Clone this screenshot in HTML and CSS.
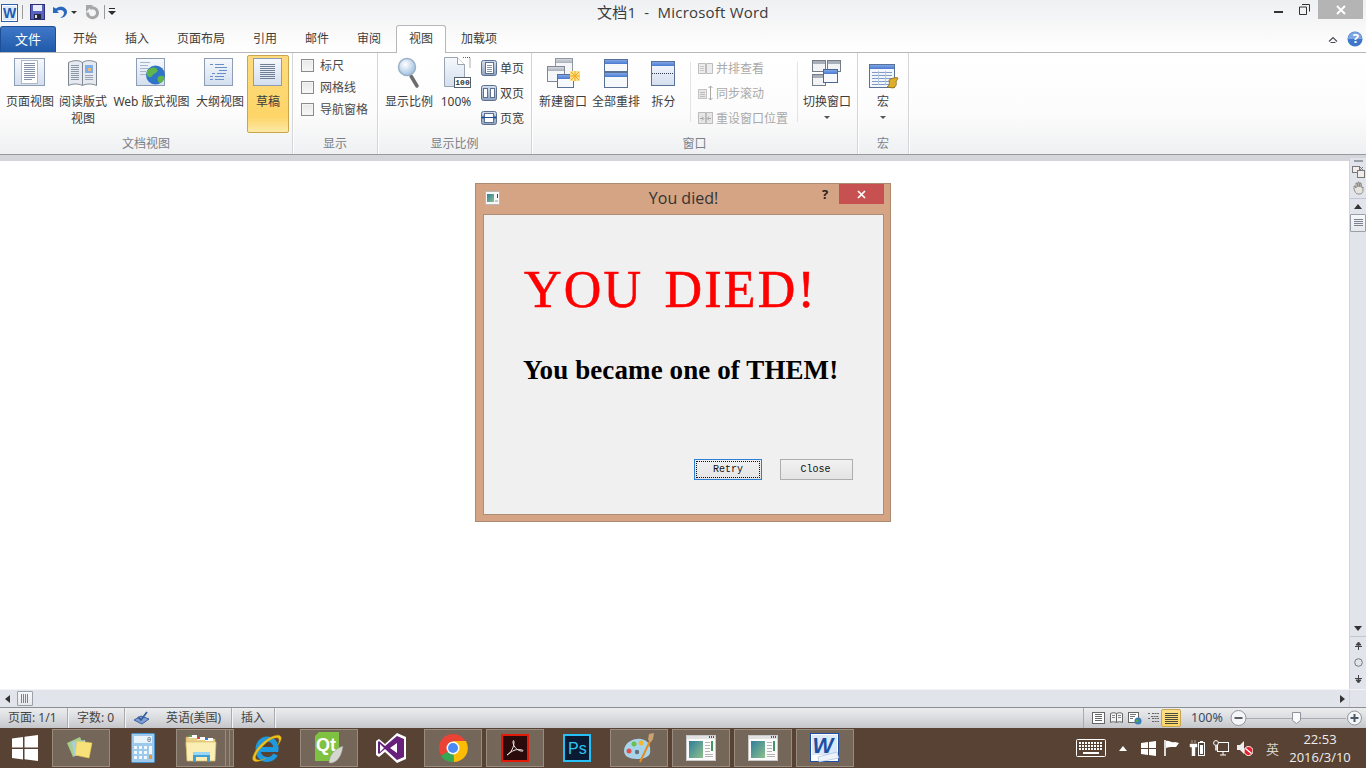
FILE: index.html
```html
<!DOCTYPE html>
<html lang="zh-CN">
<head>
<meta charset="utf-8">
<title>文档1 - Microsoft Word</title>
<link rel="stylesheet" href="styles.css">
</head>
<body>
<svg class="defs" width="0" height="0" aria-hidden="true">
  <defs>
    <linearGradient id="gBox" x1="0" y1="0" x2="0" y2="1"><stop offset="0" stop-color="#f7f9fd"/><stop offset="1" stop-color="#d3deee"/></linearGradient>
    <linearGradient id="gBar" x1="0" y1="0" x2="0" y2="1"><stop offset="0" stop-color="#7fa6e8"/><stop offset="1" stop-color="#4a79d0"/></linearGradient>
    <linearGradient id="gGrey" x1="0" y1="0" x2="0" y2="1"><stop offset="0" stop-color="#d4d8de"/><stop offset="1" stop-color="#a9afb8"/></linearGradient>
    <radialGradient id="gLens" cx=".4" cy=".35" r=".7"><stop offset="0" stop-color="#ffffff"/><stop offset="1" stop-color="#9dbde0"/></radialGradient>
    <linearGradient id="gSlate" x1="0" y1="0" x2="0" y2="1"><stop offset="0" stop-color="#d5e0ef"/><stop offset="1" stop-color="#8ea3c0"/></linearGradient>
    <linearGradient id="gMini" x1="0" y1="0" x2="1" y2="1"><stop offset="0" stop-color="#2f7f9c"/><stop offset="1" stop-color="#8fbf8a"/></linearGradient>
    <symbol id="miniwin" viewBox="0 0 30 26">
      <rect x=".5" y=".5" width="29" height="25" fill="#fbfbfb" stroke="#c9c9c9"/>
      <rect x="1" y="1" width="28" height="3" fill="#e2e2e2"/>
      <path d="M23 2h1M25 2h1M27 2h1" stroke="#555" stroke-width="2"/>
      <rect x="3" y="6" width="14" height="17" fill="url(#gMini)"/>
      <path d="M19 7.500h5M19 10.500h5M19 13.500h5M19 16.500h5M19 19.500h8M19 21.500h8" stroke="#b5b5b5"/>
      <rect x="25" y="6" width="2" height="10" fill="#3f9a62"/>
    </symbol>
  </defs>
</svg>

<div class="app">
  <header class="titlebar">
    <div class="qat">
      <svg class="qat-word" width="17" height="18" viewBox="0 0 17 18"><rect x=".5" y=".5" width="16" height="17" fill="#fff" stroke="#2a62b0"/><rect x="2" y="2" width="13" height="14" fill="#dbe8f8"/><text x="8.500" y="14" text-anchor="middle" class="svg-w">W</text></svg>
      <span class="qat-sep"></span>
      <svg width="15" height="16" viewBox="0 0 15 16"><rect x=".5" y=".5" width="14" height="15" fill="#5a62c0" stroke="#2c2f78"/><rect x="3" y="1" width="9" height="6" fill="#e9edf7"/><rect x="4" y="10" width="7" height="5" fill="#22263a"/><rect x="5" y="11" width="2" height="3" fill="#dfe3f2"/></svg>
      <svg class="qat-undo" width="16" height="15" viewBox="0 0 16 15"><path d="M1 2v6h6L5 6c3-2 7-1 7 2 0 2-2 4-4 5 4 0 7-3 7-6C15 2 8 0 4 3.500z" fill="#2a68bf"/></svg>
      <span class="drop"></span>
      <svg class="qat-redo" width="14" height="15" viewBox="0 0 14 15"><path d="M5 3.500a5 5 0 1 1-2.500 4" fill="none" stroke="#a6a6a6" stroke-width="3"/><path d="M1 0h7L1 7z" fill="#a6a6a6"/></svg>
      <span class="qat-sep qat-sep2"></span>
      <svg width="8" height="8" viewBox="0 0 8 8"><path d="M1 0h6v1H1zM0 3h8L4 7z" fill="#2b2b2b"/></svg>
    </div>
    <div class="doc-title">文档1 &nbsp;-&nbsp; Microsoft Word</div>
    <div class="winctl">
      <svg width="9" height="4" viewBox="0 0 9 4" class="wc-min"><rect y="1" width="9" height="2" fill="#333"/></svg>
      <svg width="11" height="11" viewBox="0 0 11 11" class="wc-max"><path d="M3 .5h7.500v7M.5 3h7v7.500h-7z" fill="none" stroke="#333"/></svg>
      <div class="wc-close"><svg width="10" height="10" viewBox="0 0 10 10"><path d="M1 1l8 8M9 1l-8 8" stroke="#fff" stroke-width="2"/></svg></div>
    </div>
  </header>

  <nav class="tabs">
    <div class="tab tab-file">文件</div>
    <div class="tab">开始</div>
    <div class="tab">插入</div>
    <div class="tab">页面布局</div>
    <div class="tab">引用</div>
    <div class="tab">邮件</div>
    <div class="tab">审阅</div>
    <div class="tab tab-active">视图</div>
    <div class="tab tab-last">加载项</div>
    <div class="tabs-right">
      <svg width="10" height="7" viewBox="0 0 10 7"><path d="M1 5.500L5 1.500l4 4M2.500 6.500h5" fill="none" stroke="#4a4f57" stroke-width="1.200"/></svg>
      <svg width="16" height="16" viewBox="0 0 16 16"><circle cx="8" cy="8" r="7.500" fill="#3f77c9"/><path d="M1 8a7 7 0 0 1 14 0z" fill="#7ea6e2"/></svg>
      <span class="help-q">?</span>
    </div>
  </nav>

  <section class="ribbon">
    <div class="group g1">
      <div class="gbody gap5">
        <div class="btn w48">
          <div class="ico"><svg width="32" height="32" viewBox="0 0 32 32"><rect x=".5" y=".5" width="30" height="27" fill="url(#gBox)" stroke="#8d9db3"/><rect x="7.500" y="2.500" width="16" height="23" fill="#fff" stroke="#aeb8c6"/><path d="M10 5.500h11M10 7.500h11M10 9.500h11M10 11.500h11M10 13.500h11M10 15.500h11M10 17.500h11M10 19.500h11M10 21.500h8" stroke="#8291a6"/></svg></div>
          <div class="lbl">页面视图</div>
        </div>
        <div class="btn w48">
          <div class="ico"><svg width="32" height="32" viewBox="0 0 32 32"><path d="M1.500 4.500c4-2 10-3 14 0 4-3 10-2 14 0v23c-4-2-10-2-14 0-4-2-10-2-14 0z" fill="#e6eaf0" stroke="#7d8794"/><path d="M15.500 4v23" stroke="#7d8794"/><path d="M4 7.500h8M4 9.500h8M4 11.500h8M4 13.500h8M4 15.500h8M4 17.500h8M4 19.500h8M4 21.500h8" stroke="#8e99a8"/><rect x="18" y="7" width="8" height="8" fill="#7db0e4"/><rect x="21" y="10" width="3" height="3" fill="#f2b47a"/><path d="M18 17.500h8M18 19.500h8M18 21.500h8" stroke="#9aa5b4"/></svg></div>
          <div class="lbl">阅读版式<br>视图</div>
        </div>
        <div class="btn w79">
          <div class="ico"><svg width="32" height="32" viewBox="0 0 32 32"><rect x=".5" y=".5" width="28" height="27" fill="url(#gBox)" stroke="#8d9db3"/><path d="M4 4.500h10M4 7.500h8M4 10.500h8M4 13.500h6M4 16.500h6" stroke="#a5b5cc"/><circle cx="19.500" cy="17" r="9.500" fill="#2f74c8"/><path d="M12 12c3-3 7-3 9-1s-1 4-3 5-2 4-5 3-3-5-1-7zM22 19c2-1 5-2 6 0s-2 6-4 6-3-4-2-6z" fill="#5fb54b"/></svg></div>
          <div class="lbl">Web 版式视图</div>
        </div>
        <div class="btn w48">
          <div class="ico"><svg width="32" height="32" viewBox="0 0 32 32"><rect x=".5" y=".5" width="28" height="27" fill="url(#gBox)" stroke="#8d9db3"/><path d="M6 6.500h3M11 6.500h9M11 9.500h12M15 12.500h8M8 15.500h3M13 15.500h9M6 18.500h3M11 18.500h9M6 21.500h3M11 21.500h9" stroke="#6a8fc8"/></svg></div>
          <div class="lbl">大纲视图</div>
        </div>
        <div class="btn btn-on">
          <div class="ico"><svg width="30" height="30" viewBox="0 0 30 30"><rect x=".5" y=".5" width="28" height="27" fill="url(#gBox)" stroke="#8d9db3"/><path d="M7 6.500h15M7 8.500h15M7 10.500h15M7 12.500h15M7 14.500h15M7 16.500h15M7 18.500h15M7 20.500h15" stroke="#6f7f95"/></svg></div>
          <div class="lbl">草稿</div>
        </div>
      </div>
      <div class="gname">文档视图</div>
    </div>

    <div class="group g2">
      <div class="gbody col-checks">
        <label class="chk"><span class="box"></span>标尺</label>
        <label class="chk"><span class="box"></span>网格线</label>
        <label class="chk"><span class="box"></span>导航窗格</label>
      </div>
      <div class="gname">显示</div>
    </div>

    <div class="group g3">
      <div class="gbody">
        <div class="btn w48">
          <div class="ico ico-low"><svg width="24" height="32" viewBox="0 0 24 32"><path d="M14 19l6 10" stroke="#6c6c6c" stroke-width="3.500" stroke-linecap="round"/><circle cx="10" cy="10" r="8.500" fill="url(#gLens)" stroke="#9ab0c8" stroke-width="1.500"/></svg></div>
          <div class="lbl">显示比例</div>
        </div>
        <div class="btn w32">
          <div class="ico ico-low ico-zoom"><svg width="27" height="32" viewBox="0 0 27 32"><path d="M.5 .5h13l7 7v22H.5z" fill="url(#gBox)" stroke="#9aa4b2"/><path d="M13.500 .5v7h7" fill="#fff" stroke="#9aa4b2"/><path d="M19 .5h7v10" fill="none" stroke="#55606e" stroke-dasharray="1 1"/><rect x="10.500" y="20.500" width="16" height="10" fill="#fff" stroke="#55606e"/><text x="18.500" y="28" text-anchor="middle" class="svg-100">100</text></svg></div>
          <div class="lbl">100%</div>
        </div>
        <div class="list">
          <div class="li"><svg width="16" height="16" viewBox="0 0 16 16"><rect x=".5" y=".5" width="15" height="15" rx="2" fill="url(#gSlate)" stroke="#5d7090"/><rect x="4.500" y="2.500" width="8" height="11" fill="#fff" stroke="#5d7090"/><path d="M6 5.500h5M6 7.500h5M6 9.500h5M6 11.500h5" stroke="#8795aa"/></svg>单页</div>
          <div class="li"><svg width="16" height="16" viewBox="0 0 16 16"><rect x=".5" y=".5" width="15" height="15" rx="2" fill="url(#gSlate)" stroke="#5d7090"/><rect x="2.500" y="3.500" width="4" height="9" fill="#fff" stroke="#5d7090"/><rect x="9.500" y="3.500" width="4" height="9" fill="#fff" stroke="#5d7090"/></svg>双页</div>
          <div class="li"><svg width="16" height="16" viewBox="0 0 16 16"><rect x=".5" y="1.500" width="15" height="13" rx="2" fill="url(#gSlate)" stroke="#5d7090"/><rect x="3.500" y="3.500" width="9" height="9" fill="#fff" stroke="#5d7090"/><path d="M1 7.500h14M1 7.500l2-2M1 7.500l2 2M15 7.500l-2-2M15 7.500l-2 2" stroke="#1c4f96" fill="none"/></svg>页宽</div>
        </div>
      </div>
      <div class="gname">显示比例</div>
    </div>

    <div class="group g4">
      <div class="gbody">
        <div class="btn w48">
          <div class="ico"><svg width="33" height="32" viewBox="0 0 33 32"><rect x="8.500" y=".5" width="17" height="17" fill="#f4f6fa" stroke="#8e97a4"/><rect x="9" y="1" width="16" height="4" fill="url(#gGrey)"/><rect x=".5" y="8.500" width="17" height="15" fill="#f4f6fa" stroke="#7e8793"/><rect x="1" y="9" width="16" height="4" fill="url(#gGrey)"/><rect x="10.500" y="16.500" width="16" height="13" fill="#f6f8fc" stroke="#5a7196"/><rect x="11" y="17" width="15" height="4" fill="url(#gBar)"/><path d="M23 13h10v10H23z" fill="#fbe28a"/><path d="M28 13v10M23 18h10M24 14l8 8M32 14l-8 8" stroke="#f3a81e"/></svg></div>
          <div class="lbl">新建窗口</div>
        </div>
        <div class="btn w48 ml5">
          <div class="ico"><svg width="24" height="32" viewBox="0 0 24 32"><rect x=".5" y="1.500" width="23" height="12" fill="#f6f8fc" stroke="#5a7196"/><rect x="1" y="2" width="22" height="4" fill="url(#gBar)"/><rect x=".5" y="14.500" width="23" height="15" fill="#f6f8fc" stroke="#5a7196"/><rect x="1" y="15" width="22" height="4" fill="url(#gBar)"/></svg></div>
          <div class="lbl">全部重排</div>
        </div>
        <div class="btn w25 ml11">
          <div class="ico"><svg width="25" height="32" viewBox="0 0 25 32"><rect x=".5" y="3.500" width="23" height="24" fill="url(#gBox)" stroke="#5a7196"/><rect x="1" y="4" width="22" height="4" fill="url(#gBar)"/><path d="M1 15.500h22" stroke="#333c4a" stroke-dasharray="1 1"/></svg></div>
          <div class="lbl">拆分</div>
        </div>
        <span class="vdiv vdiv1"></span>
        <div class="list list-off">
          <div class="li"><svg width="17" height="16" viewBox="0 0 17 16"><path d="M1.500 3.500h7v10h-7zM9.500 3.500h6v10h-6z" fill="#ececec" stroke="#bdbdbd"/><path d="M3 6.500h4M3 8.500h4M3 10.500h4" stroke="#c8c8c8"/></svg>并排查看</div>
          <div class="li"><svg width="17" height="16" viewBox="0 0 17 16"><rect x="1.500" y="4.500" width="8" height="9" fill="#e6e6e6" stroke="#c4c4c4"/><path d="M3 7.500h5M3 9.500h5M3 11.500h5" stroke="#bdbdbd"/><path d="M13.500 1v14M11.500 3l2-2 2 2M11.500 13l2 2 2-2" fill="none" stroke="#a9a9a9"/></svg>同步滚动</div>
          <div class="li"><svg width="17" height="16" viewBox="0 0 17 16"><rect x="1.500" y="2.500" width="7" height="11" fill="#e6e6e6" stroke="#bdbdbd"/><rect x="9.500" y="2.500" width="6" height="11" fill="#e6e6e6" stroke="#bdbdbd"/><path d="M3 8.500h3M5 6.500l2 2-2 2M14 8.500h-3M12 6.500l-2 2 2 2" fill="none" stroke="#a3a3a3"/></svg>重设窗口位置</div>
        </div>
        <span class="vdiv vdiv2"></span>
        <div class="btn w48 ml5">
          <div class="ico"><svg width="30" height="32" viewBox="0 0 30 32"><rect x=".5" y="2.500" width="13" height="11" fill="#f2f3f5" stroke="#767c85"/><rect x="1" y="3" width="12" height="3" fill="#a9afb8"/><rect x="15.500" y="2.500" width="13" height="11" fill="#f2f3f5" stroke="#767c85"/><rect x="16" y="3" width="12" height="3" fill="#a9afb8"/><rect x=".5" y="16.500" width="13" height="11" fill="#f2f3f5" stroke="#767c85"/><rect x="1" y="17" width="12" height="3" fill="#a9afb8"/><rect x="11.500" y="11.500" width="14" height="13" fill="#f6f8fc" stroke="#4d6790"/><rect x="12" y="12" width="13" height="4" fill="url(#gBar)"/></svg></div>
          <div class="lbl">切换窗口</div>
          <span class="drop drop-btn"></span>
        </div>
      </div>
      <div class="gname">窗口</div>
    </div>

    <div class="group g5">
      <div class="gbody">
        <div class="btn w50">
          <div class="ico ico-macro"><svg width="30" height="28" viewBox="0 0 30 28"><rect x=".5" y=".5" width="25" height="23" fill="#f3f6fb" stroke="#5a7196"/><rect x="1" y="1" width="24" height="4" fill="url(#gBar)"/><path d="M3 8.500h20M3 11.500h20M3 14.500h20M3 17.500h20M3 20.500h20" stroke="#7f9cc7"/><path d="M9.500 7v14M16.500 7v14" stroke="#b5c6de"/><path d="M20 16c3-2 7-3 9-2l-2 4c1 2 0 5-3 6l-6-1c2-1 3-3 2-7z" fill="#dcae2c" stroke="#8a6a12" stroke-width=".8"/></svg></div>
          <div class="lbl">宏</div>
          <span class="drop drop-btn"></span>
        </div>
      </div>
      <div class="gname">宏</div>
    </div>
  </section>

  <div class="strip"></div>

  <div class="docrow">
    <main class="doc"></main>
    <aside class="vscroll">
      <div class="vs-top">
        <span class="vs-dash"></span>
        <svg width="13" height="13" viewBox="0 0 13 13"><rect x=".5" y="1.500" width="7" height="6" fill="#f2ecec" stroke="#777"/><rect x="5.500" y="5.500" width="7" height="7" fill="#f2ecec" stroke="#777"/><path d="M8 2l3 3M11 2L8 5" stroke="#777"/></svg>
        <svg width="13" height="14" viewBox="0 0 13 14"><path d="M2 8V5l1 0 1 2V2l1 0 1 4V1h1l1 5V2h1l1 5 1-1v3c0 2-1 4-3 4H6C4 13 3 11 2 8z" fill="#e6e4dc" stroke="#777" stroke-width=".8"/></svg>
        <span class="vs-line"></span>
        <span class="arrow-up"></span>
        <span class="vs-thumb"><svg width="9" height="8" viewBox="0 0 9 8"><path d="M0 .5h9M0 2.500h9M0 4.500h9M0 6.500h9" stroke="#7c828c"/></svg></span>
      </div>
      <div class="vs-bot">
        <span class="arrow-down"></span>
        <span class="vs-line"></span>
        <svg width="7" height="8" viewBox="0 0 7 8"><path d="M3.500 0L6 3H1zM0 4.500h7M3.500 3v5" stroke="#444" fill="#444"/></svg>
        <svg class="vs-circle" width="9" height="9" viewBox="0 0 9 9"><circle cx="4.500" cy="4.500" r="3.800" fill="none" stroke="#777"/></svg>
        <svg width="7" height="8" viewBox="0 0 7 8"><path d="M3.500 8L6 5H1zM0 3.500h7M3.500 0v5" stroke="#444" fill="#444"/></svg>
      </div>
    </aside>
  </div>

  <div class="hscroll">
    <span class="arrow-left"></span>
    <span class="hs-thumb"><svg width="8" height="9" viewBox="0 0 8 9"><path d="M.5 0v9M2.500 0v9M4.500 0v9M6.500 0v9" stroke="#7c828c"/></svg></span>
    <span class="arrow-right"></span>
    <span class="hs-corner"></span>
  </div>

  <footer class="status">
    <span class="st st-page">页面: 1/1</span>
    <span class="st st-words">字数: 0</span>
    <span class="st st-lang"><svg width="17" height="15" viewBox="0 0 17 15"><path d="M1 9l7-4 8 3-7 5z" fill="#7ea0d6" stroke="#3b5f9c"/><path d="M5 6l3 3 6-8" fill="none" stroke="#3b5f9c" stroke-width="1.800"/></svg>英语(美国)</span>
    <span class="st st-ins">插入</span>
    <div class="st-right">
      <svg class="vw" width="13" height="12" viewBox="0 0 13 12"><rect x=".5" y=".5" width="12" height="11" fill="#fff" stroke="#666"/><path d="M3 2.500h7M3 4.500h7M3 6.500h7M3 8.500h7" stroke="#666"/></svg>
      <svg class="vw" width="13" height="12" viewBox="0 0 13 12"><path d="M.5 1.500c2-1 4-1 6 0 2-1 4-1 6 0v9c-2-1-4-1-6 0-2-1-4-1-6 0zM6.500 1.500v9" fill="#f3f3f3" stroke="#666"/><path d="M2 3.500h3M2 5.500h3M8 3.500h3M8 5.500h3" stroke="#888"/></svg>
      <svg class="vw" width="14" height="13" viewBox="0 0 14 13"><rect x=".5" y=".5" width="10" height="10" fill="#fff" stroke="#666"/><path d="M2 2.500h6M2 4.500h5M2 6.500h3" stroke="#777"/><circle cx="10" cy="9" r="3.500" fill="#3a80b8"/><path d="M8 8c2-1 3 0 2 2l-2 0z" fill="#55aa44"/></svg>
      <svg class="vw" width="13" height="12" viewBox="0 0 13 12"><path d="M1 1.500h2M5 1.500h7M4 4.500h8M1 6.500h2M5 6.500h7M5 9.500h7" stroke="#666" stroke-dasharray="2 .6"/></svg>
      <span class="vw-on"><svg width="13" height="11" viewBox="0 0 13 11"><path d="M0 .5h13M0 2.500h13M0 4.500h13M0 6.500h13M0 8.500h13M0 10.500h13" stroke="#4b4b3c"/></svg></span>
      <span class="zoomtext">100%</span>
      <svg class="zoomer" width="132" height="18" viewBox="0 0 132 18"><path d="M16 9.500h100" stroke="#a9adb3"/><circle cx="8.500" cy="9" r="7.500" fill="#f4f5f7" stroke="#8f949c"/><rect x="4.500" y="8" width="8" height="2" fill="#5a5f67"/><circle cx="124.500" cy="9" r="7" fill="#f4f5f7" stroke="#8f949c"/><path d="M120.500 9h8M124.500 5v8" stroke="#4a5968" stroke-width="2"/><path d="M62.500 3.500h8v8l-4 3-4-3z" fill="#fafafa" stroke="#8f949c"/></svg>
    </div>
  </footer>

  <div class="taskbar">
    <div class="tb-start"><svg width="26" height="26" viewBox="0 0 26 26"><path d="M0 3.500l11-1.500v10.500H0zM12.500 1.800L26 0v12.500H12.500zM0 14h11v10.500L0 23zM12.500 14H26v12l-13.500-1.800z" fill="#fff"/></svg></div>

    <div class="tb hl"><svg width="32" height="28" viewBox="0 0 32 28"><path d="M2 9l13-6 6 14-13 6z" fill="#a6d08a"/><path d="M7 8l13-2 2 14-13 2z" fill="#a8cdea"/><path d="M12 7l15 2-3 15-14-3z" fill="#f7e27a" stroke="#e8c94c" stroke-width=".6"/></svg></div>

    <div class="tb"><svg width="24" height="30" viewBox="0 0 24 30"><rect x=".5" y=".5" width="23" height="29" rx="1" fill="#9cc9ec" stroke="#4c93cc"/><rect x="3" y="3" width="18" height="7" fill="#e9f3fb"/><text x="16" y="9" class="svg-calc">0</text><path d="M3 13h3v3H3zM8 13h3v3H8zM13 13h3v3h-3zM3 18h3v3H3zM8 18h3v3H8zM13 18h3v3h-3zM3 23h3v3H3zM8 23h3v3H8zM13 23h3v3h-3z" fill="#f4f8fc"/><rect x="18" y="13" width="3" height="8" fill="#f4f8fc"/><rect x="18" y="22" width="3" height="4" fill="#e8943a"/></svg></div>

    <div class="tb-stack">
      <div class="tb hl tb-exp"><svg width="32" height="30" viewBox="0 0 32 30"><path d="M1 4h11l2 2h16v8H1z" fill="#e9cf85" stroke="#c9a95a" stroke-width=".6"/><rect x="4" y="2" width="8" height="3" fill="#fff"/><rect x="4" y="2" width="3" height="2" fill="#4aa84a"/><rect x="12" y="4" width="8" height="3" fill="#fff"/><rect x="12" y="4" width="3" height="2" fill="#d04a3a"/><rect x="20" y="5" width="8" height="3" fill="#fff"/><rect x="20" y="5" width="3" height="2" fill="#3a80d0"/><path d="M1 9h30l-1 19H2z" fill="#fbeeb4" stroke="#d9bd6e" stroke-width=".7"/><path d="M8 21h17v8h-3v-5H11v5H8z" fill="#3fa0d8"/><path d="M8 19h17v3H8z" fill="#9bd6f2"/></svg></div>
      <span class="tb-edge"></span><span class="tb-edge"></span>
    </div>

    <div class="tb"><svg width="31" height="32" viewBox="0 0 31 32"><path d="M6.500 17.500H24c.5-6-3.500-10.500-9-10.500-5 0-9 4.500-9 10.500S10 27.500 15 27.500c4 0 7-2 8.500-5" fill="none" stroke="#1e9be0" stroke-width="5"/><path d="M1 28C-1 24 7 12 17 6c6-3 11-4 12-1 1 2-1 5-3 8 1-3 2-6 0-7-3-1-8 1-13 6C7 17 2 24 4 27c2 2 6 1 10-1-5 3-11 5-13 2z" fill="#f1c21b" stroke="#c99a12" stroke-width=".5"/></svg></div>

    <div class="tb hl"><svg width="30" height="34" viewBox="0 0 30 34"><path d="M5 1h20v20l-7 9H1V5z" fill="#7fc241"/><text x="2" y="20" class="svg-qt">Qt</text><path d="M15 32c0-7 5-14 14-17-1 8-4 15-11 17z" fill="#d6d6d0" stroke="#8e8e88" stroke-width=".5"/></svg></div>

    <div class="tb"><svg width="32" height="32" viewBox="0 0 32 32"><path d="M22 1l9 4v22l-9 4-12-11-6 5-3-2V9l3-2 6 5z" fill="#fff"/><path d="M22 4l7 3v18l-7 3-12-11-6 5-1-1V10l1-1 6 5zM22 11l-7 5 7 5zM5 12v8l4-4z" fill="#68217a" fill-rule="evenodd"/></svg></div>

    <div class="tb hl"><svg width="30" height="30" viewBox="0 0 30 30"><circle cx="15" cy="15" r="14" fill="#ea4335"/><path d="M15 15L3 23a14 14 0 0 0 13 6z" fill="#34a853"/><path d="M15 8h13a14 14 0 0 1-12 21z" fill="#fbbc05"/><circle cx="15" cy="15" r="6.500" fill="#fff"/><circle cx="15" cy="15" r="5" fill="#4a8af4"/></svg></div>

    <div class="tb hl"><svg width="28" height="28" viewBox="0 0 28 28"><rect x="1" y="1" width="26" height="26" fill="#2a0a0a" stroke="#e21a0a" stroke-width="2"/><path d="M6 21c4-2 7-8 7-13 0-2-1-2-1 0 0 5 6 10 10 9 1-1-4-2-8-1-3 1-7 4-8 5z" fill="none" stroke="#f0e6e6" stroke-width="1"/></svg></div>

    <div class="tb"><svg width="28" height="28" viewBox="0 0 28 28"><rect x="1" y="1" width="26" height="26" fill="#0a1a33" stroke="#25c0f5" stroke-width="2"/><text x="5" y="20" class="svg-ps">Ps</text></svg></div>

    <div class="tb hl"><svg width="32" height="32" viewBox="0 0 32 32"><path d="M1 19C1 11 10 6 18 7c8 1 10 8 9 14-1 5-9 6-13 6-8 0-13-3-13-8z" fill="#a7d4ea"/><circle cx="6" cy="19" r="2.500" fill="#e0504a"/><circle cx="11" cy="12" r="2.500" fill="#6cc04a"/><circle cx="18" cy="11" r="2.500" fill="#f2b632"/><circle cx="14" cy="20" r="2.200" fill="#64707c"/><path d="M17 30L28 7" stroke="#e88a1c" stroke-width="2"/><path d="M25 8l1-6 5-1-1 6-2 3z" fill="#c9a470"/></svg></div>

    <div class="tb hl"><svg width="30" height="26"><use href="#miniwin"/></svg></div>
    <div class="tb hl"><svg width="30" height="26"><use href="#miniwin"/></svg></div>

    <div class="tb hl"><svg width="30" height="30" viewBox="0 0 30 30"><rect x=".5" y=".5" width="28" height="28" fill="#fff" stroke="#1d4fa2"/><rect x="2" y="2" width="25" height="20" fill="#dbe8f8"/><text x="13" y="20" text-anchor="middle" class="svg-word">W</text><path d="M8 24l19-5 2 6-20 4z" fill="#eef3fa" stroke="#8aa6d0" stroke-width=".5"/></svg></div>

    <div class="tray">
      <svg class="t-kb" width="30" height="18" viewBox="0 0 30 18"><rect x=".5" y=".5" width="29" height="17" rx="1" fill="none" stroke="#fff"/><path d="M3 4h24M3 7h24M3 10h24" stroke="#fff" stroke-width="2" stroke-dasharray="2 1"/><path d="M7 14h16" stroke="#fff" stroke-width="2"/></svg>
      <svg class="t-up" width="8" height="5" viewBox="0 0 8 5"><path d="M4 0l4 5H0z" fill="#fff"/></svg>
      <svg class="t-win" width="15" height="15" viewBox="0 0 15 15"><path d="M0 2l7-1v6H0zM8 1l7-1v7H8zM0 8h7v6l-7-1zM8 8h7v7l-7-1z" fill="#fff"/></svg>
      <svg class="t-flag" width="16" height="16" viewBox="0 0 16 16"><path d="M1 0v16" stroke="#fff" stroke-width="1.600"/><path d="M2 1c3-1 5 2 9 1l4 1-3 4H8C6 7 4 7 2 8z" fill="#fff"/></svg>
      <svg class="t-bat" width="16" height="16" viewBox="0 0 16 16"><path d="M3 0v3M6 0v3M1 4h7v3H6v9H3V7H1z" fill="#fff" stroke="#fff" stroke-width=".5"/><rect x="9.500" y="2.500" width="6" height="13" fill="none" stroke="#fff"/><rect x="11" y="5" width="3" height="9" fill="#fff"/><rect x="11" y="1" width="3" height="1" fill="#fff"/></svg>
      <svg class="t-net" width="16" height="16" viewBox="0 0 16 16"><rect x="4.500" y="2.500" width="11" height="9" fill="none" stroke="#fff"/><path d="M7 15h6M10 12v3" stroke="#fff"/><circle cx="3" cy="3" r="2.400" fill="#574234" stroke="#fff"/><path d="M3 5.500v5" stroke="#fff" stroke-width="1.500"/></svg>
      <svg class="t-vol" width="16" height="16" viewBox="0 0 16 16"><path d="M0 5h3l4-4v13l-4-4H0z" fill="#eee"/><circle cx="11.500" cy="11" r="4.500" fill="#e2202a" stroke="#fff"/><path d="M8.500 8.500l6 5" stroke="#fff" stroke-width="1.500"/></svg>
      <span class="t-ime">英</span>
      <div class="clock"><div>22:53</div><div>2016/3/10</div></div>
    </div>
  </div>

  <div class="dialog">
    <div class="dlg-head">
      <svg class="dlg-ico" width="15" height="14" viewBox="0 0 15 14"><rect x=".5" y=".5" width="14" height="13" fill="#f8f8f8" stroke="#b9b9b9"/><rect x="2" y="3" width="7" height="8" fill="url(#gMini)"/><rect x="10" y="9" width="3" height="2" fill="#c9c9c9"/><rect x="12" y="3" width="1" height="4" fill="#444"/></svg>
      <span class="dlg-title">You died!</span>
      <span class="dlg-help">?</span>
      <span class="dlg-close"><svg width="9" height="9" viewBox="0 0 9 9"><path d="M1 1l7 7M8 1L1 8" stroke="#fff" stroke-width="1.700"/></svg></span>
    </div>
    <div class="dlg-body">
      <h1 class="died">YOU DIED!</h1>
      <p class="them">You became one of THEM!</p>
      <div class="dlg-btns">
        <button class="qbtn qbtn-focus"><span>Retry</span></button>
        <button class="qbtn qbtn-close"><span>Close</span></button>
      </div>
    </div>
  </div>
</div>
</body>
</html>
```

FILE: styles.css
```css
* { box-sizing: border-box; }
html, body { margin: 0; padding: 0; width: 1366px; height: 768px; overflow: hidden; }
body {
  font-family: "Noto Sans", "Noto Sans CJK SC", sans-serif;
  font-size: 12px;
  color: #3c3c3c;
  background: #fff;
}
svg { display: block; flex: none; }
.defs { position: absolute; }

.app { position: relative; width: 1366px; height: 768px; display: flex; flex-direction: column; }

/* title bar */
.titlebar {
  height: 25px; flex: none; display: flex; align-items: flex-start; position: relative;
  background: linear-gradient(#eef0f2, #f7f7f8);
}
.qat { display: flex; align-items: center; height: 24px; padding-left: 1px; }
.qat-word { margin-top: 2px; }
.qat-sep { width: 1px; height: 14px; background: #9a9a9a; margin: 0 7px 0 4px; }
.qat-sep2 { margin: 0 3px 0 5px; }
.qat-undo { margin-left: 7px; }
.qat-redo { margin-left: 8px; }
.drop { width: 0; height: 0; border-left: 3px solid transparent; border-right: 3px solid transparent; border-top: 3px solid #333; margin-left: 3px; }
.doc-title {
  position: absolute; left: 597px; top: 0; line-height: 25px;
  font-family: "Open Sans", "Noto Sans CJK SC", sans-serif; font-size: 15px; letter-spacing: .2px; color: #3b3b3b; white-space: nowrap;
}
.winctl { margin-left: auto; display: flex; align-items: flex-start; padding-right: 3px; }
.wc-min { margin: 10px 16px 0 0; }
.wc-max { margin: 4px 8px 0 0; }
.wc-close { width: 45px; height: 19px; background: #b4b4b4; display: flex; align-items: center; justify-content: center; }

/* tabs */
.tabs {
  height: 28px; flex: none; display: flex; align-items: stretch; padding-top: 1px;
  background: linear-gradient(#f7f7f8, #ffffff);
  border-bottom: 1px solid #b5b7ba;
}
.tab { padding: 0 14px; line-height: 25px; color: #3c3c3c; font-size: 12px; }
.tab-file {
  width: 56px; padding: 0; text-align: center; margin-right: 3px; color: #fff; font-size: 13px;
  background: linear-gradient(#3f78c8, #1f5aa8); border: 1px solid #1d4f97; border-bottom: 0; border-radius: 3px 3px 0 0;
}
.tab-active {
  padding: 0 12px; margin-left: 1px; margin-top: -1px; margin-bottom: -1px; line-height: 26px; background: #fff;
  border: 1px solid #b5b7ba; border-bottom: 0; border-radius: 3px 3px 0 0;
}
.tab-last { padding-left: 15px; }
.tabs-right { margin-left: auto; position: relative; display: flex; align-items: center; gap: 9px; padding-right: 3px; }
.help-q { position: absolute; right: 7px; top: 3px; font-size: 13px; line-height: 18px; font-weight: 700; color: #fff; }

/* ribbon */
.ribbon {
  height: 102px; flex: none; display: flex;
  background: linear-gradient(#ffffff, #fcfcfc 60%, #eff0f2);
  border-bottom: 1px solid #96999e;
}
.group { display: flex; flex-direction: column; border-right: 1px solid #d3d5d9; box-shadow: 1px 0 0 #fff; flex: none; }
.g1 { width: 293px; } .g2 { width: 85px; } .g3 { width: 154px; } .g4 { width: 326px; } .g5 { width: 51px; }
.gbody { flex: 1; display: flex; padding-top: 2px; }
.g1 .gbody { padding-left: 6px; }
.g3 .gbody { padding-left: 7px; gap: 7px; }
.g4 .gbody { padding-left: 7px; }
.gap5 { gap: 5px; }
.gname { height: 18px; margin-bottom: 1px; line-height: 18px; text-align: center; color: #7b7f87; }
.btn { display: flex; flex-direction: column; align-items: center; flex: none; text-align: center; }
.w25 { width: 25px; } .w32 { width: 32px; } .w48 { width: 48px; } .w50 { width: 50px; } .w79 { width: 79px; }
.ml5 { margin-left: 5px; } .ml11 { margin-left: 11px; }
.ico { height: 38px; padding-top: 3px; }
.ico-low { padding-top: 2px; }
.ico-zoom { padding-left: 3px; }
.ico-macro { padding: 9px 0 0 1px; }
.lbl { line-height: 17px; white-space: nowrap; color: #3c3c3c; }
.btn-on {
  width: 42px; height: 78px; margin-left: -2px;
  background: linear-gradient(#fddb7d, #fdd568 80%, #fde9a8); border: 1px solid #c9a64e; border-radius: 2px;
}
.btn-on .ico { height: 37px; padding-top: 2px; }
.col-checks { flex-direction: column; padding: 1px 0 0 8px; }
.chk { display: flex; align-items: center; height: 22px; gap: 6px; color: #4a4a4a; }
.box { width: 13px; height: 13px; background: linear-gradient(#e7e7e7, #f8f8f8); border: 1px solid #8b8b8b; box-shadow: inset 0 0 0 1px #f4f4f4; }
.list { display: flex; flex-direction: column; margin-left: 2px; }
.li { display: flex; align-items: center; height: 25px; gap: 3px; white-space: nowrap; }
.list-off { width: 100px; margin-left: 6px; color: #a9a9a9; }
.list-off .li { gap: 2px; }
.vdiv { width: 1px; height: 60px; margin-top: 7px; background: #e2e3e6; flex: none; }
.vdiv1 { margin-left: 14px; }
.drop-btn { border-top-color: #555; margin: 6px 0 0 0; }

.strip { height: 3px; flex: none; background: #d3d6da; }

/* document */
.docrow { height: 531px; flex: none; display: flex; }
.doc { flex: 1; background: #fff; border-top: 3px solid #d3d6da; }
.vscroll {
  width: 17px; flex: none; display: flex; flex-direction: column; justify-content: space-between; align-items: center;
  background: #e1e4ea; border-left: 1px solid #cfd3da;
}
.vs-top, .vs-bot { display: flex; flex-direction: column; align-items: center; }
.vs-dash { width: 9px; height: 2px; background: #9a9ea6; margin-top: 2px; margin-bottom: 3px; }
.vs-top svg + svg { margin-top: 3px; }
.vs-line { width: 16px; height: 1px; background: #c3c7cf; }
.vs-top .vs-line { margin-top: 3px; }
.arrow-up { width: 0; height: 0; border: 4px solid transparent; border-top: 0; border-bottom: 5px solid #333; margin-top: 5px; }
.vs-thumb {
  width: 16px; height: 18px; margin-top: 5px; display: flex; align-items: center; justify-content: center;
  background: linear-gradient(#f7f8fa, #e6e8ec); border: 1px solid #9aa0a8; border-radius: 1px;
}
.vs-bot { padding-bottom: 6px; }
.arrow-down { width: 0; height: 0; border: 4px solid transparent; border-bottom: 0; border-top: 5px solid #333; margin-bottom: 5px; }
.vs-bot .vs-line { margin-bottom: 5px; }
.vs-circle { margin: 8px 0; }

.hscroll { height: 18px; flex: none; display: flex; align-items: center; background: #e1e4ea; border-top: 1px solid #f2f3f6; }
.arrow-left { width: 0; height: 0; border: 4px solid transparent; border-left: 0; border-right: 5px solid #333; margin-left: 5px; }
.hs-thumb {
  width: 16px; height: 15px; margin-left: 7px; display: flex; align-items: center; justify-content: center;
  background: linear-gradient(#f7f8fa, #e6e8ec); border: 1px solid #9aa0a8; border-radius: 1px;
}
.arrow-right { width: 0; height: 0; border: 4px solid transparent; border-right: 0; border-left: 5px solid #333; margin-left: auto; margin-right: 4px; }
.hs-corner { width: 17px; height: 100%; flex: none; background: #e1e4ea; border-left: 1px solid #cfd3da; }

/* status */
.status {
  height: 21px; flex: none; display: flex; align-items: stretch;
  background: linear-gradient(#ecedef, #d6d8db 60%, #c4c6ca);
  border-top: 1px solid #8c8f94; color: #444; line-height: 20px;
}
.st { border-right: 1px solid #a9abaf; box-shadow: 1px 0 0 #f4f4f5; display: flex; align-items: center; white-space: nowrap; flex: none; }
.st-page { width: 68px; padding-left: 8px; }
.st-words { width: 57px; padding-left: 9px; }
.st-lang { width: 107px; padding-left: 8px; gap: 16px; }
.st-ins { width: 43px; padding-left: 9px; }
.st-right { margin-left: auto; display: flex; align-items: center; padding-right: 4px; border-left: 1px solid #a9abaf; }
.vw { margin-left: 5px; }
.st-right .vw:first-child { margin-left: 8px; }
.vw-on {
  width: 20px; height: 18px; margin-left: 1px; display: flex; align-items: center; justify-content: center;
  background: linear-gradient(#fde08a, #fdd568); border: 1px solid #c9a64e; border-radius: 2px;
}
.zoomtext { width: 49px; padding-left: 10px; color: #3e4a5c; font-size: 12.500px; }

/* taskbar */
.taskbar { flex: 1; display: flex; align-items: center; gap: 4px; background: #574234; position: relative; }
.tb-start { width: 48px; padding-left: 12px; }
.tb { width: 58px; height: 38px; flex: none; display: flex; align-items: center; justify-content: center; border: 1px solid transparent; }
.hl { background: #75665a; border-color: #988b80; }
.tb-stack { display: flex; width: 58px; height: 38px; }
.tb-exp { width: 50px; }
.tb-edge { width: 4px; height: 38px; background: #75665a; border: 1px solid #988b80; border-left: 0; }
.tray { margin-left: auto; display: flex; align-items: center; color: #eee; padding-right: 6px; }
.t-kb { margin-right: 13px; }
.t-up { margin-right: 14px; }
.t-win { margin-right: 8px; }
.t-flag { margin-right: 9px; }
.t-bat { margin-right: 8px; }
.t-net { margin-right: 8px; }
.t-vol { margin-right: 13px; }
.t-ime { font-size: 13px; color: #d8d2cc; margin-right: 1px; }
.clock { width: 80px; text-align: center; font-size: 13px; line-height: 18px; font-family: "Open Sans", sans-serif; }

/* dialog over the document */
.dialog {
  position: absolute; left: 475px; top: 183px; width: 416px; height: 339px;
  background: #d4a484; border: 1px solid #ab8b72; display: flex; flex-direction: column;
  padding: 0 6px 6px 7px;
}
.dlg-head { height: 30px; flex: none; display: flex; position: relative; }
.dlg-ico { margin: 7px 0 0 2px; }
.dlg-title {
  position: absolute; left: 0; right: 0; top: 4px; text-align: center; line-height: 20px;
  font-family: "Open Sans", sans-serif; font-size: 16px; color: #333;
}
.dlg-help { position: absolute; left: 339px; top: 1px; font-weight: 700; font-size: 13px; line-height: 18px; color: #222; font-family: "Open Sans", sans-serif; }
.dlg-close { position: absolute; right: 0; top: 0; width: 45px; height: 20px; background: #c75050; display: flex; align-items: center; justify-content: center; }
.dlg-body { flex: 1; background: #f0f0f0; border: 1px solid #ac8d76; padding: 0 30px 34px 40px; display: flex; flex-direction: column; }
.died {
  margin: 49px 0 0 0; font-family: "Liberation Serif", serif; font-weight: 400; font-size: 52px; line-height: 52px;
  color: #ff0000; -webkit-text-stroke: .6px #ff0000; letter-spacing: 2.200px; word-spacing: 6px; white-space: nowrap;
}
.them { margin: 38px 0 0 -1px; font-family: "Liberation Serif", serif; font-weight: 700; font-size: 27px; letter-spacing: .1px; line-height: 32px; color: #000; white-space: nowrap; }
.dlg-btns { margin-top: auto; display: flex; justify-content: flex-end; gap: 18px; }
.qbtn {
  height: 21px; padding: 0 2px 0 0; font-family: "Liberation Mono", monospace; font-size: 10px; color: #111;
  background: linear-gradient(#f1f1f1, #e4e4e4); border: 1px solid #adadad;
}
.qbtn-focus { width: 68px; border-color: #2a7fd5; padding: 1px; }
.qbtn-focus span { display: block; height: 100%; line-height: 15px; border: 1px dotted #111; }
.qbtn-close { width: 73px; }

/* svg text */
.svg-w { font-family: "Liberation Sans", sans-serif; font-weight: 700; font-size: 14px; fill: #1d5cb0; }
.svg-100 { font-family: "Liberation Mono", monospace; font-weight: 700; font-size: 8px; fill: #333; }
.svg-calc { font-family: "Liberation Mono", monospace; font-size: 7px; fill: #555; }
.svg-qt { font-family: "Liberation Sans", sans-serif; font-weight: 700; font-size: 18px; fill: #fff; }
.svg-ps { font-family: "Liberation Sans", sans-serif; font-size: 16px; fill: #31c5f4; }
.svg-word { font-family: "Liberation Sans", sans-serif; font-weight: 700; font-size: 22px; font-style: italic; fill: #1d4fa2; }
```
